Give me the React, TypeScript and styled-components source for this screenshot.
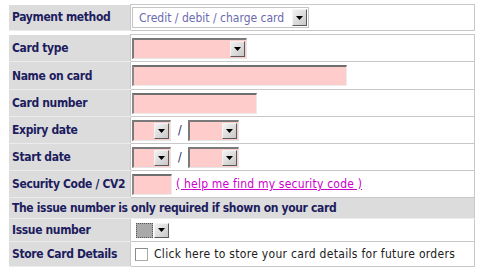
import React from 'react';
import styled, { createGlobalStyle } from 'styled-components';

const GlobalStyle = createGlobalStyle`
  html, body {
    margin: 0;
    padding: 0;
    background: #ffffff;
  }
  body {
    font-family: "DejaVu Sans Condensed", "DejaVu Sans", Verdana, sans-serif;
    font-stretch: condensed;
    font-size: 12px;
  }
`;

const Page = styled.div`
  padding: 4px 5px 0 9px;
  width: 466px;
`;

const FormTable = styled.table<{ $gap?: number }>`
  width: 466px;
  border-collapse: collapse;
  margin-bottom: ${(p) => p.$gap ?? 0}px;
  border-right: 1px solid #c8c8c8;
`;

const Row = styled.tr<{ $h: number }>`
  height: ${(p) => p.$h}px;
`;

const Label = styled.td`
  width: 118px;
  background: #dcdcdc;
  color: #1c1c5e;
  font-weight: bold;
  letter-spacing: -0.35px;
  padding: 0 0 0 3px;
  border-bottom: 1px solid #ececec;
  white-space: nowrap;
  vertical-align: middle;
`;

const Notice = styled.td`
  background: #dcdcdc;
  color: #1c1c5e;
  font-weight: bold;
  letter-spacing: -0.35px;
  padding: 0 0 0 3px;
  border-bottom: 1px solid #ececec;
  border-top: 1px solid #c8c8c8;
`;

const Value = styled.td`
  border: 1px solid #c8c8c8;
  padding: 0 2px 0 1px;
  vertical-align: middle;
`;

const Inline = styled.div`
  display: flex;
  align-items: center;
  gap: 4px;
`;

const Dropdown = styled.span<{ $w: number; $tone: 'pink' | 'white' | 'grey' }>`
  display: inline-flex;
  align-items: stretch;
  box-sizing: border-box;
  width: ${(p) => p.$w}px;
  height: ${(p) => (p.$tone === 'grey' ? 19 : 21)}px;
  padding: 1px;
  margin-left: ${(p) => (p.$tone === 'grey' ? 2 : 0)}px;
  background: ${(p) => (p.$tone === 'pink' ? '#ffcccc' : '#ffffff')};
  border-style: solid;
  border-width: 1px;
  border-color: ${(p) =>
    p.$tone === 'white' ? '#c4c4c4' : p.$tone === 'grey' ? '#ffffff' : '#7a7a7a #e6e6e6 #e6e6e6 #7a7a7a'};
  ${(p) => (p.$tone === 'pink' ? 'border-top-width: 2px; border-left-width: 2px;' : '')}
  vertical-align: middle;
`;

const DropText = styled.span<{ $grey?: boolean }>`
  flex: 1;
  display: flex;
  align-items: center;
  padding-left: 5px;
  color: #6a6aae;
  white-space: nowrap;
  overflow: hidden;
  ${(p) => (p.$grey ? 'background: #a9a9a9; border: 1px dotted #555; margin-right: 1px;' : '')}
`;

const DropButton = styled.span`
  width: 15px;
  flex: none;
  display: flex;
  align-items: center;
  justify-content: center;
  box-sizing: border-box;
  border: 1px solid;
  border-color: #f4f4f4 #5a5a5a #5a5a5a #f4f4f4;
  background: linear-gradient(135deg, #f2f2f2 0%, #c8c8c8 100%);
`;

const TextBox = styled.span<{ $w: number }>`
  display: inline-block;
  box-sizing: border-box;
  width: ${(p) => p.$w}px;
  height: 21px;
  background: #ffcccc;
  border-style: solid;
  border-width: 2px 1px 1px 2px;
  border-color: #6e6e6e #ececec #ececec #8a8a8a;
  vertical-align: middle;
`;

const Slash = styled.span`
  color: #1c1c5e;
  padding: 0 2px 0 3px;
`;

const HelpLink = styled.a`
  color: #cc00cc;
  text-decoration: underline;
  letter-spacing: 0.2px;
  white-space: nowrap;
`;

const CheckBox = styled.span`
  display: inline-block;
  width: 13px;
  height: 13px;
  box-sizing: border-box;
  border: 1px solid #a8a8a8;
  border-top-color: #8a8a8a;
  border-left-color: #8a8a8a;
  background: #ffffff;
  margin: 0 2px 0 3px;
`;

const CheckText = styled.span`
  color: #202020;
  letter-spacing: 0.3px;
  white-space: nowrap;
`;

const Arrow = () => (
  <svg width="7" height="4" viewBox="0 0 7 4">
    <path d="M0 0h7L3.5 4z" fill="#000" />
  </svg>
);

const Select = ({ w, tone, text }: { w: number; tone: 'pink' | 'white' | 'grey'; text?: string }) => (
  <Dropdown $w={w} $tone={tone}>
    <DropText $grey={tone === 'grey'}>{text}</DropText>
    <DropButton>
      <Arrow />
    </DropButton>
  </Dropdown>
);

const App = () => {
  return (
    <Page>
      <GlobalStyle />
      <FormTable $gap={3}>
        <tbody>
          <Row $h={26}>
            <Label>Payment method</Label>
            <Value>
              <Select w={177} tone="white" text="Credit / debit / charge card" />
            </Value>
          </Row>
        </tbody>
      </FormTable>

      <FormTable>
        <tbody>
          <Row $h={27}>
            <Label>Card type</Label>
            <Value>
              <Select w={115} tone="pink" />
            </Value>
          </Row>
          <Row $h={28}>
            <Label>Name on card</Label>
            <Value>
              <TextBox $w={215} />
            </Value>
          </Row>
          <Row $h={27}>
            <Label>Card number</Label>
            <Value>
              <TextBox $w={125} />
            </Value>
          </Row>
          <Row $h={27}>
            <Label>Expiry date</Label>
            <Value>
              <Inline>
                <Select w={39} tone="pink" />
                <Slash>/</Slash>
                <Select w={51} tone="pink" />
              </Inline>
            </Value>
          </Row>
          <Row $h={27}>
            <Label>Start date</Label>
            <Value>
              <Inline>
                <Select w={39} tone="pink" />
                <Slash>/</Slash>
                <Select w={51} tone="pink" />
              </Inline>
            </Value>
          </Row>
          <Row $h={27}>
            <Label>Security Code / CV2</Label>
            <Value>
              <Inline>
                <TextBox $w={40} />
                <HelpLink href="#">( help me find my security code )</HelpLink>
              </Inline>
            </Value>
          </Row>
          <tr style={{ height: 21 }}>
            <Notice colSpan={2}>The issue number is only required if shown on your card</Notice>
          </tr>
          <Row $h={23}>
            <Label>Issue number</Label>
            <Value>
              <Select w={37} tone="grey" />
            </Value>
          </Row>
          <Row $h={25}>
            <Label>Store Card Details</Label>
            <Value>
              <Inline>
                <CheckBox />
                <CheckText>Click here to store your card details for future orders</CheckText>
              </Inline>
            </Value>
          </Row>
        </tbody>
      </FormTable>
    </Page>
  );
};

export default App;
